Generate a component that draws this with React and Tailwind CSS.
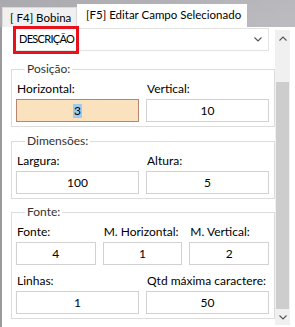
import React from "react";

const font = { fontFamily: 'Lato, "Noto Sans", sans-serif' };

function Field({ label, value, active }) {
  return (
    <div className="flex flex-col min-w-0">
      <div className="h-[16px] leading-[16px] text-[12px] text-black pl-[1px] whitespace-nowrap">
        {label}
      </div>
      <div
        className={`mt-[2px] h-[23px] flex items-center justify-center text-[12px] text-black border ${
          active
            ? "bg-[#f9e2bd] border-[#b98573]"
            : "bg-white border-[#d2d2d2]"
        }`}
      >
        {active ? (
          <span className="bg-[#9ccaf0] px-[1px] leading-[14px]">{value}</span>
        ) : (
          value
        )}
      </div>
    </div>
  );
}

function Group({ title, children, className }) {
  return (
    <fieldset
      className={`ml-[9px] w-[264px] border border-[#dcdcdc] pt-[4px] pb-[4px] pl-[4px] pr-[5px] ${className}`}
    >
      <legend className="ml-[9px] px-[2px] h-[16px] leading-[16px] text-[12px] text-[#333]">
        {title}
      </legend>
      {children}
    </fieldset>
  );
}

function Chevron({ up }) {
  return (
    <svg width="8" height="5" viewBox="0 0 8 5">
      <path
        d={up ? "M0.5 4.5 L4 1 L7.5 4.5" : "M0.5 0.5 L4 4 L7.5 0.5"}
        fill="none"
        stroke="#555"
        strokeWidth="1.1"
      />
    </svg>
  );
}

export default function App() {
  return (
    <div
      className="w-[295px] h-[327px] overflow-hidden flex flex-col bg-[linear-gradient(160deg,#a9a9ae_0%,#c4c4c9_45%,#b0b0b6_75%,#c8c8cd_100%)]"
      style={font}
    >
      {/* tabs */}
      <div className="h-[27px] flex items-end pl-[2px] shrink-0">
        <div className="h-[20px] w-[75px] bg-[#f0f0f0] border border-b-0 border-[#d9d9d9] flex items-center pl-[7px] text-[11.5px] text-black whitespace-nowrap">
          [ F4] Bobina
        </div>
        <div className="h-[23px] w-[170px] bg-white flex items-center pl-[9px] pb-[1px] text-[11.5px] text-black whitespace-nowrap">
          [F5] Editar Campo Selecionado
        </div>
      </div>

      {/* body */}
      <div className="flex-1 flex bg-white border-l-2 border-[#9a9a9a]">
        <div className="w-[273px] flex flex-col pt-[1px]">
          <div className="relative ml-[12px] w-[255px] h-[23px] border border-[#e3e3e3] flex items-center justify-between pl-[4px] pr-[6px] text-[11px] tracking-[-0.7px] text-black">
            <span>DESCRIÇÃO</span>
            <Chevron />
            <div className="absolute left-[-2px] top-[-3px] w-[66px] h-[28px] border-[3px] border-[#e8121c]" />
          </div>

          <Group title="Posição:" className="mt-[10px]">
            <div className="grid grid-cols-2 gap-x-[7px]">
              <Field label="Horizontal:" value="3" active />
              <Field label="Vertical:" value="10" />
            </div>
          </Group>

          <Group title="Dimensões:" className="mt-[6px]">
            <div className="grid grid-cols-2 gap-x-[7px]">
              <Field label="Largura:" value="100" />
              <Field label="Altura:" value="5" />
            </div>
          </Group>

          <Group title="Fonte:" className="mt-[5px]">
            <div className="grid grid-cols-3 gap-x-[7px]">
              <Field label="Fonte:" value="4" />
              <Field label="M. Horizontal:" value="1" />
              <Field label="M. Vertical:" value="2" />
            </div>
            <div className="grid grid-cols-2 gap-x-[7px] mt-[8px]">
              <Field label="Linhas:" value="1" />
              <Field label="Qtd máxima caractere:" value="50" />
            </div>
          </Group>
        </div>

        {/* scrollbar */}
        <div className="w-[15px] mt-[3px] h-[295px] bg-[#f0f0f0] flex flex-col">
          <div className="h-[16px] flex items-center justify-center">
            <Chevron up />
          </div>
          <div className="h-[36px]" />
          <div className="h-[227px] mx-[1px] bg-[#cdcdcd]" />
          <div className="h-[16px] flex items-center justify-center">
            <Chevron />
          </div>
        </div>
      </div>
    </div>
  );
}
